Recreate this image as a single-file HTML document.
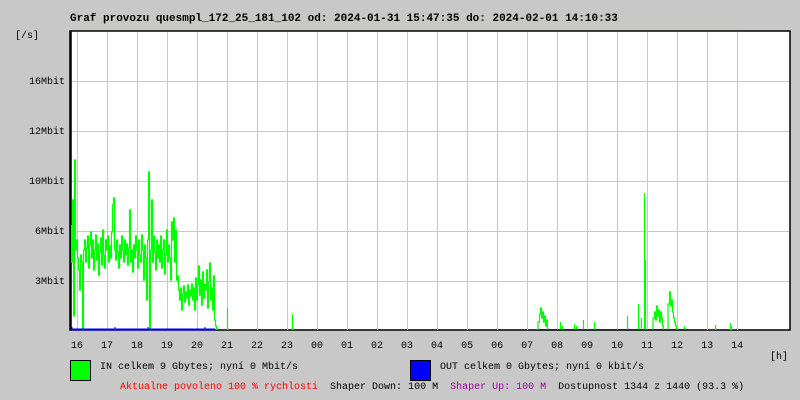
<!DOCTYPE html>
<html><head><style>
body{margin:0;background:#c8c8c8;width:800px;height:400px;overflow:hidden;position:relative;font-family:"Liberation Mono","DejaVu Sans Mono",monospace;}
.t{position:absolute;font-size:10px;white-space:pre;line-height:12px;color:#000}
</style></head><body>
<div class="t" style="left:70px;top:13px;font-size:11px;font-weight:bold">Graf provozu quesmpl_172_25_181_102 od: 2024-01-31 15:47:35 do: 2024-02-01 14:10:33</div>
<div class="t" style="left:15px;top:31px">[/s]</div>
<div class="t" style="left:29px;top:77px">16Mbit</div>
<div class="t" style="left:29px;top:127px">12Mbit</div>
<div class="t" style="left:29px;top:177px">10Mbit</div>
<div class="t" style="left:35px;top:227px">6Mbit</div>
<div class="t" style="left:35px;top:277px">3Mbit</div>
<svg style="position:absolute;left:0;top:0" width="800" height="400">
<rect x="70" y="31" width="720" height="299" fill="#fff" stroke="#000" stroke-width="1.5"/>
<g stroke="#c8c8c8" stroke-width="1">
<path d="M77.5 32V330M107.5 32V330M137.5 32V330M167.5 32V330M197.5 32V330M227.5 32V330M257.5 32V330M287.5 32V330M317.5 32V330M347.5 32V330M377.5 32V330M407.5 32V330M437.5 32V330M467.5 32V330M497.5 32V330M527.5 32V330M557.5 32V330M587.5 32V330M617.5 32V330M647.5 32V330M677.5 32V330M707.5 32V330M737.5 32V330"/>
<path d="M71 81.5H789M71 131.5H789M71 181.5H789M71 231.5H789M71 281.5H789"/>
</g>
<path d="M70 31.5H743" stroke="#d00" stroke-width="1"/>
<path d="M71 330V31" stroke="#000" stroke-width="1.5"/>
<g fill="none" stroke="#00ff00" stroke-width="1.2">
<path d="M71.5 225V262H72.5V200H73.5V316H74.5V160H75.5V250H76.5V240H77.5V258H78.5V270H79.5V290H80.5V255H81.5V262H82.5V330H83.5V250H84.5V240H85.5V262H86.5V248H87.5V236H88.5V268H89.5V245H90.5V232H91.5V258H92.5V240H93.5V270H94.5V250H95.5V235H96.5V260H97.5V244H98.5V275H99.5V252H100.5V238H101.5V265H102.5V230H103.5V255H104.5V268H105.5V240H106.5V250H107.5V236H108.5V262H109.5V246H110.5V258H111.5V232H112.5V205H113.5V198H114.5V250H115.5V260H116.5V240H117.5V252H118.5V268H119.5V245H120.5V258H121.5V236H122.5V250H123.5V262H124.5V240H125.5V255H126.5V244H127.5V265H128.5V248H129.5V210H130.5V262H131.5V250H132.5V272H133.5V245H134.5V258H135.5V236H136.5V250H137.5V268H138.5V240H139.5V255H140.5V262H141.5V235H142.5V250H143.5V280H144.5V245H145.5V258H146.5V300H147.5V240H148.5V172H149.5V330H150.5V250H151.5V200H152.5V262H153.5V236H154.5V252H155.5V270H156.5V240H157.5V258H158.5V245H159.5V262H160.5V236H161.5V268H162.5V250H163.5V240H164.5V274H165.5V255H166.5V230H167.5V262H168.5V245H169.5V258H170.5V280H171.5V222H172.5V240H173.5V218H174.5V262H175.5V230H176.5V280H177.5V276H178.5V290H179.5V300H180.5V288H181.5V310H182.5V294H183.5V286H184.5V302H185.5V292H186.5V298H187.5V285H188.5V305H189.5V290H190.5V296H191.5V284H192.5V300H193.5V288H194.5V310H195.5V278H196.5V300H197.5V285H198.5V266H199.5V295H200.5V280H201.5V305H202.5V272H203.5V298H204.5V284H205.5V290H206.5V270H207.5V308H208.5V282H209.5V263H210.5V300H211.5V288H212.5V310H213.5V276H214.5V320H215.5V326H216.5V330"/>
<path d="M227.5 330V308M292.5 330V314"/>
<path d="M538 330V322H539.5V314H540.5V308H541.5V318H542.5V312H543.5V322H544.5V316H545.5V326H546.5V320H547.5V330"/>
<path d="M560.5 330V322M562.5 330V326M574.5 330V324M576.5 330V326M583.5 330V320M594.5 330V322M627.5 330V316M638.5 330V304M641.5 330V318M644.5 330V193M645.5 330V260"/>
<path d="M653 330V318H654.5V312H655.5V320H656.5V306H657.5V316H658.5V310H659.5V322H660.5V312H661.5V318H662.5V326H663.5V330"/>
<path d="M668 330V304H669.5V292H670.5V306H671.5V300H672.5V312H673.5V318H674.5V322H675.5V326H676.5V330"/>
<path d="M684.5 330V326M715.5 330V325M730.5 330V323M731.5 330V326"/>
</g>
<path d="M72 329.5H215" stroke="#0000ff" stroke-width="2"/>
<path d="M72 327V330M115 327V330M148 327V330M205 327V330" stroke="#0000ff" stroke-width="1"/>
<path d="M538 329.5H688" stroke="#0000cc" stroke-width="1" opacity="0.6"/>
<rect x="70.5" y="360.5" width="20" height="20" fill="#00ff00" stroke="#000"/>
<rect x="410.5" y="360.5" width="20" height="20" fill="#0000ff" stroke="#000"/>
</svg>
<div class="t" style="left:71px;top:341px">16   17   18   19   20   21   22   23   00   01   02   03   04   05   06   07   08   09   10   11   12   13   14</div>
<div class="t" style="left:770px;top:352px">[h]</div>
<div class="t" style="left:100px;top:362px">IN celkem 9 Gbytes; nyní 0 Mbit/s</div>
<div class="t" style="left:440px;top:362px">OUT celkem 0 Gbytes; nyní 0 kbit/s</div>
<div class="t" style="left:120px;top:382px"><span style="color:#f00">Aktualne povoleno 100 % rychlosti</span>  Shaper Down: 100 M  <span style="color:#a000a0">Shaper Up: 100 M</span>  Dostupnost 1344 z 1440 (93.3 %)</div>
</body></html>
